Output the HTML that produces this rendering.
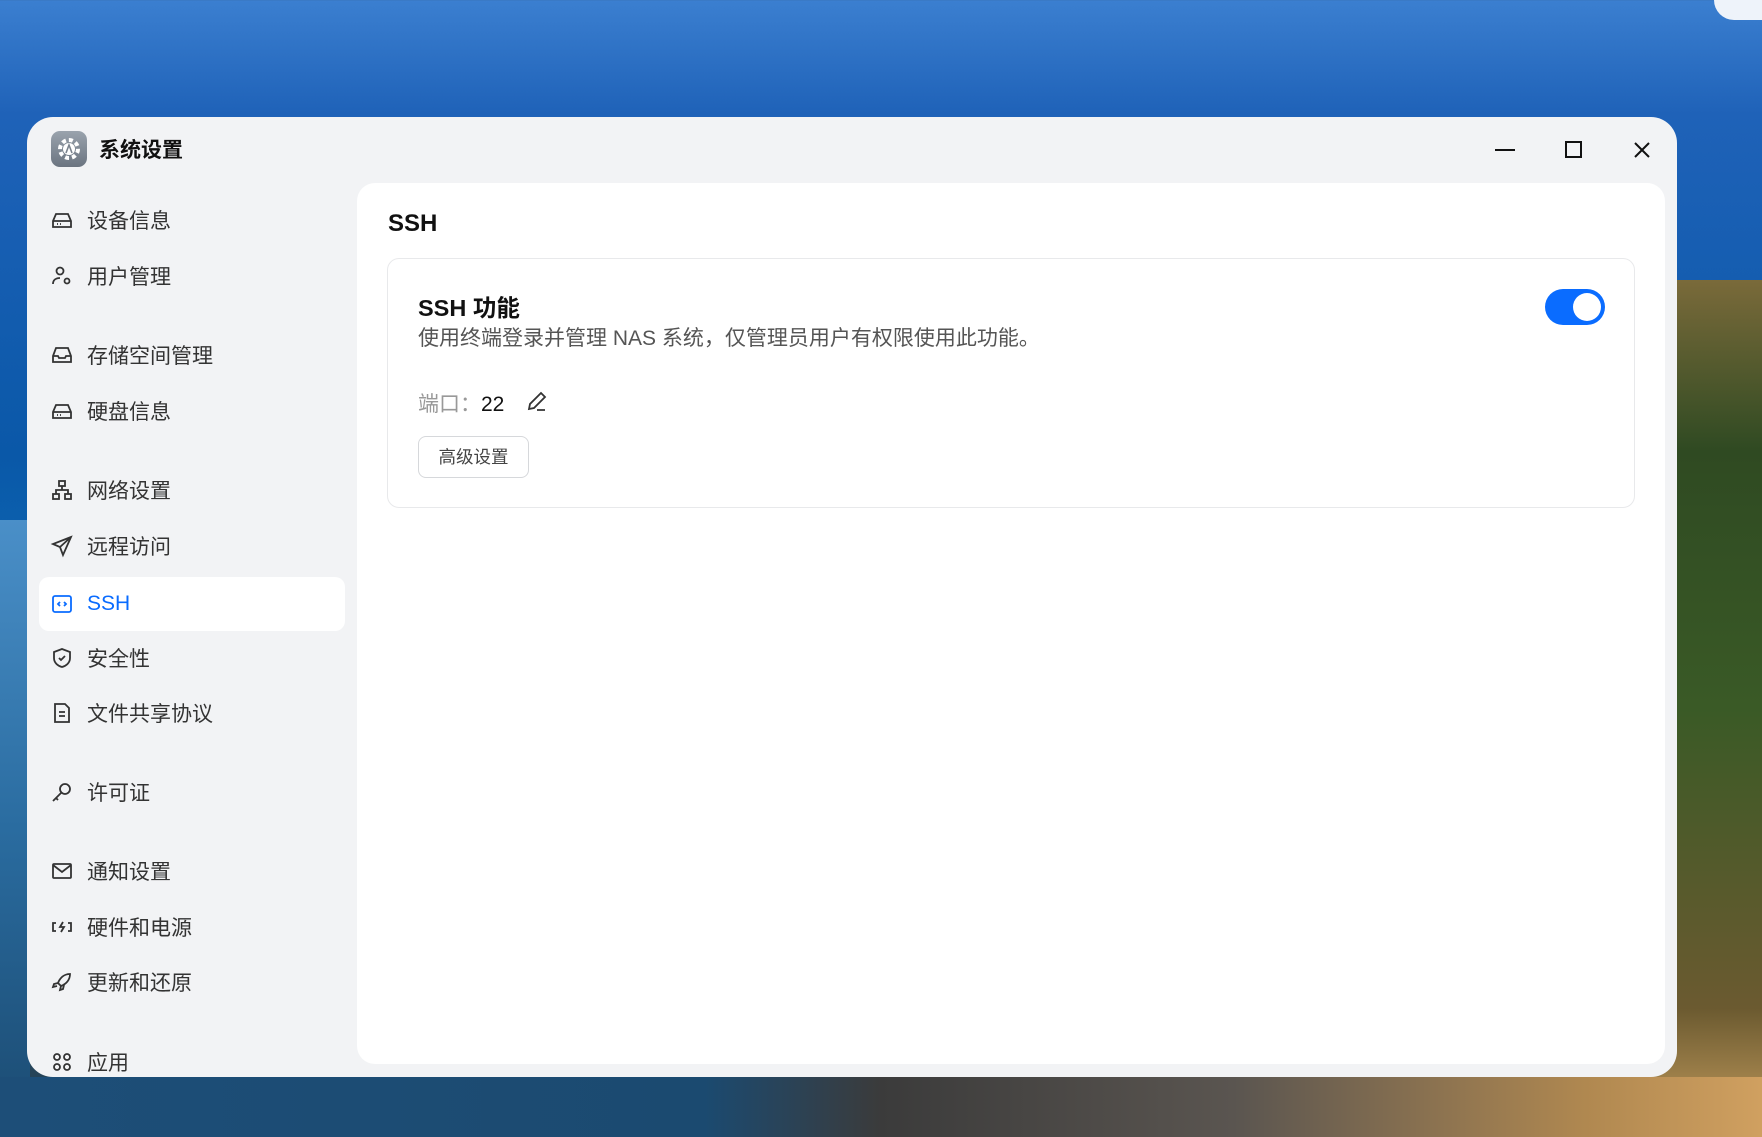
<!DOCTYPE html>
<html><head><meta charset="utf-8"><style>
*{margin:0;padding:0;box-sizing:border-box}
body{width:1762px;height:1137px;overflow:hidden;position:relative;font-family:"Liberation Sans","Noto Sans CJK SC",sans-serif;
background:linear-gradient(180deg,#3b7fd0 0%,#1f62b8 10%,#0a58a8 40%,#0d6fb8 60%,#1d5d8a 80%,#2a3a45 100%);}
.land{position:absolute;right:0;top:280px;width:110px;height:857px;background:linear-gradient(180deg,#7a6a3a,#2f4a22 20%,#3a5a26 50%,#6b5a30 85%,#c9a060)}
.sea{position:absolute;left:0;top:520px;width:30px;height:617px;background:linear-gradient(180deg,#4a8fc8,#2a6ca0 50%,#1b4a70)}
.bottom{position:absolute;left:0;top:1077px;width:1762px;height:60px;background:linear-gradient(90deg,#1d4e78 0%,#1b4a70 40%,#3b3b3b 50%,#5a5550 70%,#b08850 90%,#d0a060)}
.pill{position:absolute;left:1714px;top:-20px;width:80px;height:40px;border-radius:20px;background:#eef3fa}
.win{position:absolute;left:27px;top:117px;width:1650px;height:960px;background:#f2f3f5;border-radius:26px;overflow:hidden}
.panel{position:absolute;left:330px;top:66px;width:1308px;height:881px;background:#fff;border-radius:18px}
.ttl{position:absolute;left:72px;top:17px;font-size:21px;font-weight:bold;color:#111}
.appicon{position:absolute;left:24px;top:14px;width:36px;height:36px;border-radius:9px;background:linear-gradient(180deg,#9aa3ad,#6b7480)}
.item{position:absolute;left:12px;width:306px;height:54px;display:flex;align-items:center;font-size:21px;color:#333}
.item svg{position:absolute;left:11px;width:24px;height:24px}
.item span{position:absolute;left:48px}
.sel{background:#fff;border-radius:10px;color:#0a6cff}
.card{position:absolute;left:30px;top:75px;width:1248px;height:250px;border:1px solid #e8e9eb;border-radius:12px}
</style></head><body>
<div class="sea"></div><div class="land"></div><div class="bottom"></div><div class="pill"></div>
<div class="win">
<div class="appicon"><svg width="36" height="36" viewBox="0 0 36 36"><circle cx="18" cy="18" r="9" fill="none" stroke="#fff" stroke-width="4" stroke-dasharray="4 3"/><circle cx="18" cy="18" r="6" fill="#fff"/><path d="M15 22l3-8 3 8" stroke="#7a838e" stroke-width="1.6" fill="none"/></svg></div>
<div class="ttl">系统设置</div>
<svg style="position:absolute;left:1466px;top:23px" width="24" height="20"><path d="M2 10h20" stroke="#111" stroke-width="2"/></svg>
<svg style="position:absolute;left:1536px;top:23px" width="20" height="20"><rect x="3" y="2" width="15" height="15" fill="none" stroke="#111" stroke-width="2"/></svg>
<svg style="position:absolute;left:1605px;top:23px" width="20" height="20"><path d="M3 3l14 14M17 3L3 17" stroke="#111" stroke-width="2"/></svg>

<div class="item" style="top:76px"><svg viewBox="0 0 24 24" fill="none" stroke="#333" stroke-width="1.8"><path d="M3 13l3-7h12l3 7v6H3z M3 13h18"/><path d="M7 16h1M10 16h1"/></svg><span>设备信息</span></div>
<div class="item" style="top:132px"><svg viewBox="0 0 24 24" fill="none" stroke="#333" stroke-width="1.8"><circle cx="10" cy="7" r="3.5"/><path d="M3 20c0-4 3-6 7-6"/><circle cx="17" cy="17" r="2.5"/></svg><span>用户管理</span></div>
<div class="item" style="top:211px"><svg viewBox="0 0 24 24" fill="none" stroke="#333" stroke-width="1.8"><path d="M3 13l3-8h12l3 8v6H3z M3 13h5l1 2h6l1-2h5"/></svg><span>存储空间管理</span></div>
<div class="item" style="top:267px"><svg viewBox="0 0 24 24" fill="none" stroke="#333" stroke-width="1.8"><path d="M3 13l3-7h12l3 7v6H3z M3 13h18"/><path d="M7 16h1M10 16h1"/></svg><span>硬盘信息</span></div>
<div class="item" style="top:346px"><svg viewBox="0 0 24 24" fill="none" stroke="#333" stroke-width="1.8"><rect x="9" y="3" width="6" height="5"/><rect x="3" y="16" width="6" height="5"/><rect x="15" y="16" width="6" height="5"/><path d="M12 8v4M6 16v-4h12v4"/></svg><span>网络设置</span></div>
<div class="item" style="top:402px"><svg viewBox="0 0 24 24" fill="none" stroke="#333" stroke-width="1.8"><path d="M21 3L3 10l7 3 3 8z M10 13l11-10"/></svg><span>远程访问</span></div>
<div class="item sel" style="top:460px"><svg viewBox="0 0 24 24" fill="none" stroke="#0a6cff" stroke-width="1.8"><rect x="3" y="4" width="18" height="16" rx="2"/><path d="M10 10l-2 2 2 2M14 10l2 2-2 2"/></svg><span>SSH</span></div>
<div class="item" style="top:514px"><svg viewBox="0 0 24 24" fill="none" stroke="#333" stroke-width="1.8"><path d="M12 3l8 3v6c0 5-4 8-8 9-4-1-8-4-8-9V6z"/><path d="M9 12l2 2 4-4"/></svg><span>安全性</span></div>
<div class="item" style="top:569px"><svg viewBox="0 0 24 24" fill="none" stroke="#333" stroke-width="1.8"><path d="M5 3h10l4 4v14H5z M9 11h6M9 15h6"/></svg><span>文件共享协议</span></div>
<div class="item" style="top:648px"><svg viewBox="0 0 24 24" fill="none" stroke="#333" stroke-width="1.8"><circle cx="15" cy="9" r="5"/><path d="M11 13l-8 8M6 18l2 2"/></svg><span>许可证</span></div>
<div class="item" style="top:727px"><svg viewBox="0 0 24 24" fill="none" stroke="#333" stroke-width="1.8"><rect x="3" y="5" width="18" height="14" rx="1"/><path d="M3 6l9 7 9-7"/></svg><span>通知设置</span></div>
<div class="item" style="top:783px"><svg viewBox="0 0 24 24" fill="none" stroke="#333" stroke-width="1.8"><path d="M6 8H3v8h3M18 8h3v8h-3M13 7l-3 5h4l-3 5"/></svg><span>硬件和电源</span></div>
<div class="item" style="top:838px"><svg viewBox="0 0 24 24" fill="none" stroke="#333" stroke-width="1.8"><path d="M20 4c-6 0-10 4-12 9l3 3c5-2 9-6 9-12z M8 13l-4 1-1 3 4-1M11 16l-1 4 3-1 1-4"/></svg><span>更新和还原</span></div>
<div class="item" style="top:918px"><svg viewBox="0 0 24 24" fill="none" stroke="#333" stroke-width="1.8"><circle cx="7" cy="7" r="3"/><circle cx="17" cy="7" r="3"/><circle cx="7" cy="17" r="3"/><circle cx="17" cy="17" r="3"/></svg><span>应用</span></div>

<div class="panel">
<div style="position:absolute;left:31px;top:27px;font-size:24px;font-weight:bold;color:#111">SSH</div>
<div class="card">
<div style="position:absolute;left:30px;top:30px;font-size:23.5px;font-weight:bold;color:#111">SSH 功能</div>
<div style="position:absolute;left:30px;top:63px;font-size:21px;color:#555">使用终端登录并管理 NAS 系统，仅管理员用户有权限使用此功能。</div>
<div style="position:absolute;left:30px;top:129px;font-size:21px;color:#999">端口：<span style="color:#111">22</span></div>
<svg style="position:absolute;left:137px;top:130px" width="24" height="24" viewBox="0 0 24 24" fill="none" stroke="#333" stroke-width="1.8"><path d="M4 20l1-5L16 4l4 4L9 19z M12 21h8"/></svg>
<div style="position:absolute;left:30px;top:177px;width:111px;height:42px;border:1px solid #d6d8db;border-radius:8px;font-size:17.5px;color:#444;text-align:center;line-height:40px">高级设置</div>
<div style="position:absolute;left:1157px;top:30px;width:60px;height:36px;border-radius:18px;background:#0a6cff"><div style="position:absolute;right:4px;top:4px;width:28px;height:28px;border-radius:50%;background:#fff"></div></div>
</div>
</div>
</div>
</body></html>
